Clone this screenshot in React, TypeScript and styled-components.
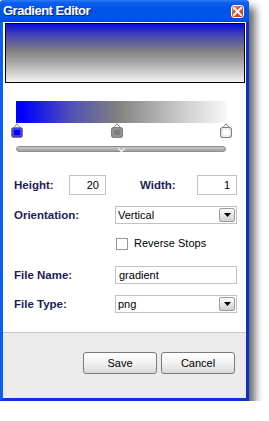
import styled, { createGlobalStyle } from 'styled-components'

const GlobalStyle = createGlobalStyle`
	html, body {
		margin: 0;
		padding: 0;
		background: #ffffff;
	}
	body {
		font-family: 'Liberation Sans', Arial, sans-serif;
	}
`

interface Stop {
	pos: number
	color: string
}

const STOPS: Stop[] = [
	{ pos: 0, color: '#0000ff' },
	{ pos: 0.478, color: '#7c7c7c' },
	{ pos: 1, color: '#ffffff' },
]

const BAR_WIDTH = 211

const StopMarker = ({ color }: { color: string }) => (
	<svg width='12' height='15' viewBox='0 0 12 15'>
		<path d='M6 0.8 L9.2 4.5 L2.8 4.5 Z' fill='#ffffff' stroke='#808080' strokeWidth='1' />
		<rect x='0.5' y='4.5' width='11' height='10' rx='2.5' fill={color} stroke='#808080' strokeWidth='1.2' />
		<rect x='2' y='6' width='8' height='7' rx='1' fill='none' stroke='#c8c8c8' strokeWidth='0.6' />
	</svg>
)

const DropButton = () => (
	<DropBtn>
		<svg width='7' height='4' viewBox='0 0 7 4'>
			<path d='M0 0 L7 0 L3.5 4 Z' fill='#000' />
		</svg>
	</DropBtn>
)

const App = () => {
	return (
		<>
			<GlobalStyle />
			<Window>
				<TitleBar>
					<Title>Gradient Editor</Title>
					<CloseBtn>
						<svg width='9' height='9' viewBox='0 0 9 9'>
							<path d='M1 1 L8 8 M8 1 L1 8' stroke='#fff' strokeWidth='2' strokeLinecap='square' />
						</svg>
					</CloseBtn>
				</TitleBar>
				<Frame>
					<Content>
						<Preview />
						<GradientSection>
							<GradientBar />
							<StopsRow>
								{STOPS.map((s) => (
									<StopSlot key={s.pos} style={{ left: Math.round(s.pos * (BAR_WIDTH - 2)) - 5 }}>
										<StopMarker color={s.color} />
									</StopSlot>
								))}
							</StopsRow>
							<Track>
								<Thumb>
									<svg width='7' height='4' viewBox='0 0 7 4'>
										<path d='M0.5 0.5 L3.5 3.5 L6.5 0.5' stroke='#ffffff' strokeWidth='1.2' fill='none' />
									</svg>
								</Thumb>
							</Track>
						</GradientSection>
						<Form>
							<Row $top={0}>
								<Label $w={55}>Height:</Label>
								<NumInput $w={37}>20</NumInput>
								<Spacer $w={34} />
								<Label $w={57}>Width:</Label>
								<NumInput $w={40}>1</NumInput>
							</Row>
							<Row $top={11}>
								<Label $w={101}>Orientation:</Label>
								<Select>
									<SelectText>Vertical</SelectText>
									<DropButton />
								</Select>
							</Row>
							<Row $top={13}>
								<Spacer $w={102} />
								<Check />
								<CheckText>Reverse Stops</CheckText>
							</Row>
							<Row $top={16}>
								<Label $w={101}>File Name:</Label>
								<TextInput>gradient</TextInput>
							</Row>
							<Row $top={11}>
								<Label $w={101}>File Type:</Label>
								<Select>
									<SelectText>png</SelectText>
									<DropButton />
								</Select>
							</Row>
						</Form>
					</Content>
					<Footer>
						<Button>Save</Button>
						<Button>Cancel</Button>
					</Footer>
				</Frame>
			</Window>
		</>
	)
}

export default App

const Window = styled.div`
	width: 249px;
	display: flex;
	flex-direction: column;
	box-shadow: 6px 7px 9px rgba(0, 0, 0, 0.6);
	border-radius: 3px 3px 0 0;
`

const TitleBar = styled.div`
	height: 22px;
	box-sizing: border-box;
	display: flex;
	align-items: center;
	justify-content: space-between;
	padding: 0 5px 1px 3px;
	border-radius: 3px 3px 0 0;
	background: linear-gradient(
		to bottom,
		#2c7cf8 0%,
		#0d60ee 12%,
		#0054e6 40%,
		#0056ea 80%,
		#0048d8 100%
	);
`

const Title = styled.span`
	color: #ffffff;
	font-family: 'Liberation Sans', Arial, sans-serif;
	font-weight: bold;
	font-size: 13px;
	letter-spacing: -0.5px;
	text-shadow: 1px 1px 0 #0a1e8c;
`

const CloseBtn = styled.div`
	width: 13px;
	height: 13px;
	box-sizing: border-box;
	border: 1px solid #ffffff;
	border-radius: 3px;
	background: linear-gradient(135deg, #f08a6a 0%, #e0502a 45%, #c83a12 100%);
	display: flex;
	align-items: center;
	justify-content: center;
	margin-top: 2px;
`

const Frame = styled.div`
	border-left: 3px solid #0a5ef0;
	border-right: 3px solid #0a2fcc;
	border-bottom: 3px solid #0636d2;
	display: flex;
	flex-direction: column;
`

const Content = styled.div`
	background: #ffffff;
	padding: 1px 0 19px 0;
	display: flex;
	flex-direction: column;
`

const Preview = styled.div`
	margin-left: 2px;
	width: 240px;
	height: 60px;
	box-sizing: border-box;
	border: 1px solid #000000;
	background: linear-gradient(to bottom, #0c0cdc 0%, #4a4ab0 22%, #808080 46%, #a8a8a8 66%, #f2f2f2 100%);
`

const GradientSection = styled.div`
	margin: 18px 0 0 13px;
	width: ${BAR_WIDTH}px;
	display: flex;
	flex-direction: column;
`

const GradientBar = styled.div`
	width: ${BAR_WIDTH}px;
	height: 22px;
	background: linear-gradient(to right, #0000ff 0%, #0000ff 3%, #5050b8 26%, #808080 48%, #c4c4c4 75%, #f8f8f8 100%);
`

const StopsRow = styled.div`
	position: relative;
	height: 15px;
`

const StopSlot = styled.div`
	position: absolute;
	top: 0;
	width: 12px;
	height: 15px;
	line-height: 0;
`

const Track = styled.div`
	position: relative;
	margin-top: 8px;
	width: 210px;
	height: 6px;
	box-sizing: border-box;
	border-radius: 3px;
	border: 1px solid #8e8e8e;
	background: linear-gradient(to bottom, #c8c8c8, #a2a2a2);
`

const Thumb = styled.div`
	position: absolute;
	left: 101px;
	top: 0;
	line-height: 0;
`

const Form = styled.div`
	margin: 23px 9px 0 11px;
	display: flex;
	flex-direction: column;
`

const Row = styled.div<{ $top: number }>`
	display: flex;
	align-items: center;
	margin-top: ${({ $top }) => $top}px;
`

const Label = styled.span<{ $w: number }>`
	width: ${({ $w }) => $w}px;
	flex-shrink: 0;
	color: #1c1c58;
	font-weight: bold;
	font-size: 11.5px;
`

const Spacer = styled.div<{ $w: number }>`
	width: ${({ $w }) => $w}px;
	flex-shrink: 0;
`

const NumInput = styled.div<{ $w: number }>`
	width: ${({ $w }) => $w}px;
	height: 20px;
	box-sizing: border-box;
	border: 1px solid #c2c2c2;
	background: #ffffff;
	font-size: 11px;
	color: #000;
	display: flex;
	align-items: center;
	justify-content: flex-end;
	padding-right: 6px;
`

const TextInput = styled.div`
	width: 122px;
	height: 18px;
	box-sizing: border-box;
	border: 1px solid #c2c2c2;
	background: #ffffff;
	font-size: 11px;
	color: #000;
	display: flex;
	align-items: center;
	padding-left: 3px;
`

const Select = styled.div`
	width: 122px;
	height: 18px;
	box-sizing: border-box;
	border: 1px solid #c2c2c2;
	background: #ffffff;
	display: flex;
	align-items: center;
	justify-content: space-between;
	padding: 0 1px 0 2px;
`

const SelectText = styled.span`
	font-size: 11px;
	color: #000;
`

const DropBtn = styled.div`
	width: 16px;
	height: 14px;
	box-sizing: border-box;
	border: 1px solid #9c9c9c;
	border-radius: 2px;
	background: linear-gradient(to bottom, #fbfbfb 0%, #e6e6e6 55%, #cfcfcf 100%);
	display: flex;
	align-items: center;
	justify-content: center;
`

const Check = styled.div`
	width: 12px;
	height: 12px;
	box-sizing: border-box;
	border: 1px solid #9a9a90;
	background: #ffffff;
	flex-shrink: 0;
`

const CheckText = styled.span`
	margin-left: 6px;
	font-size: 11px;
	color: #000;
	line-height: 13px;
`

const Footer = styled.div`
	background: #ebebeb;
	border-top: 1px solid #c8c8c8;
	padding: 19px 11px 24px 0;
	display: flex;
	justify-content: flex-end;
	gap: 4px;
`

const Button = styled.div`
	width: 74px;
	height: 22px;
	box-sizing: border-box;
	border: 1px solid #7a7a7a;
	border-radius: 3px;
	background: linear-gradient(to bottom, #ffffff 0%, #f0f0f0 55%, #d8d8d8 100%);
	font-size: 11px;
	color: #000;
	display: flex;
	align-items: center;
	justify-content: center;
`
